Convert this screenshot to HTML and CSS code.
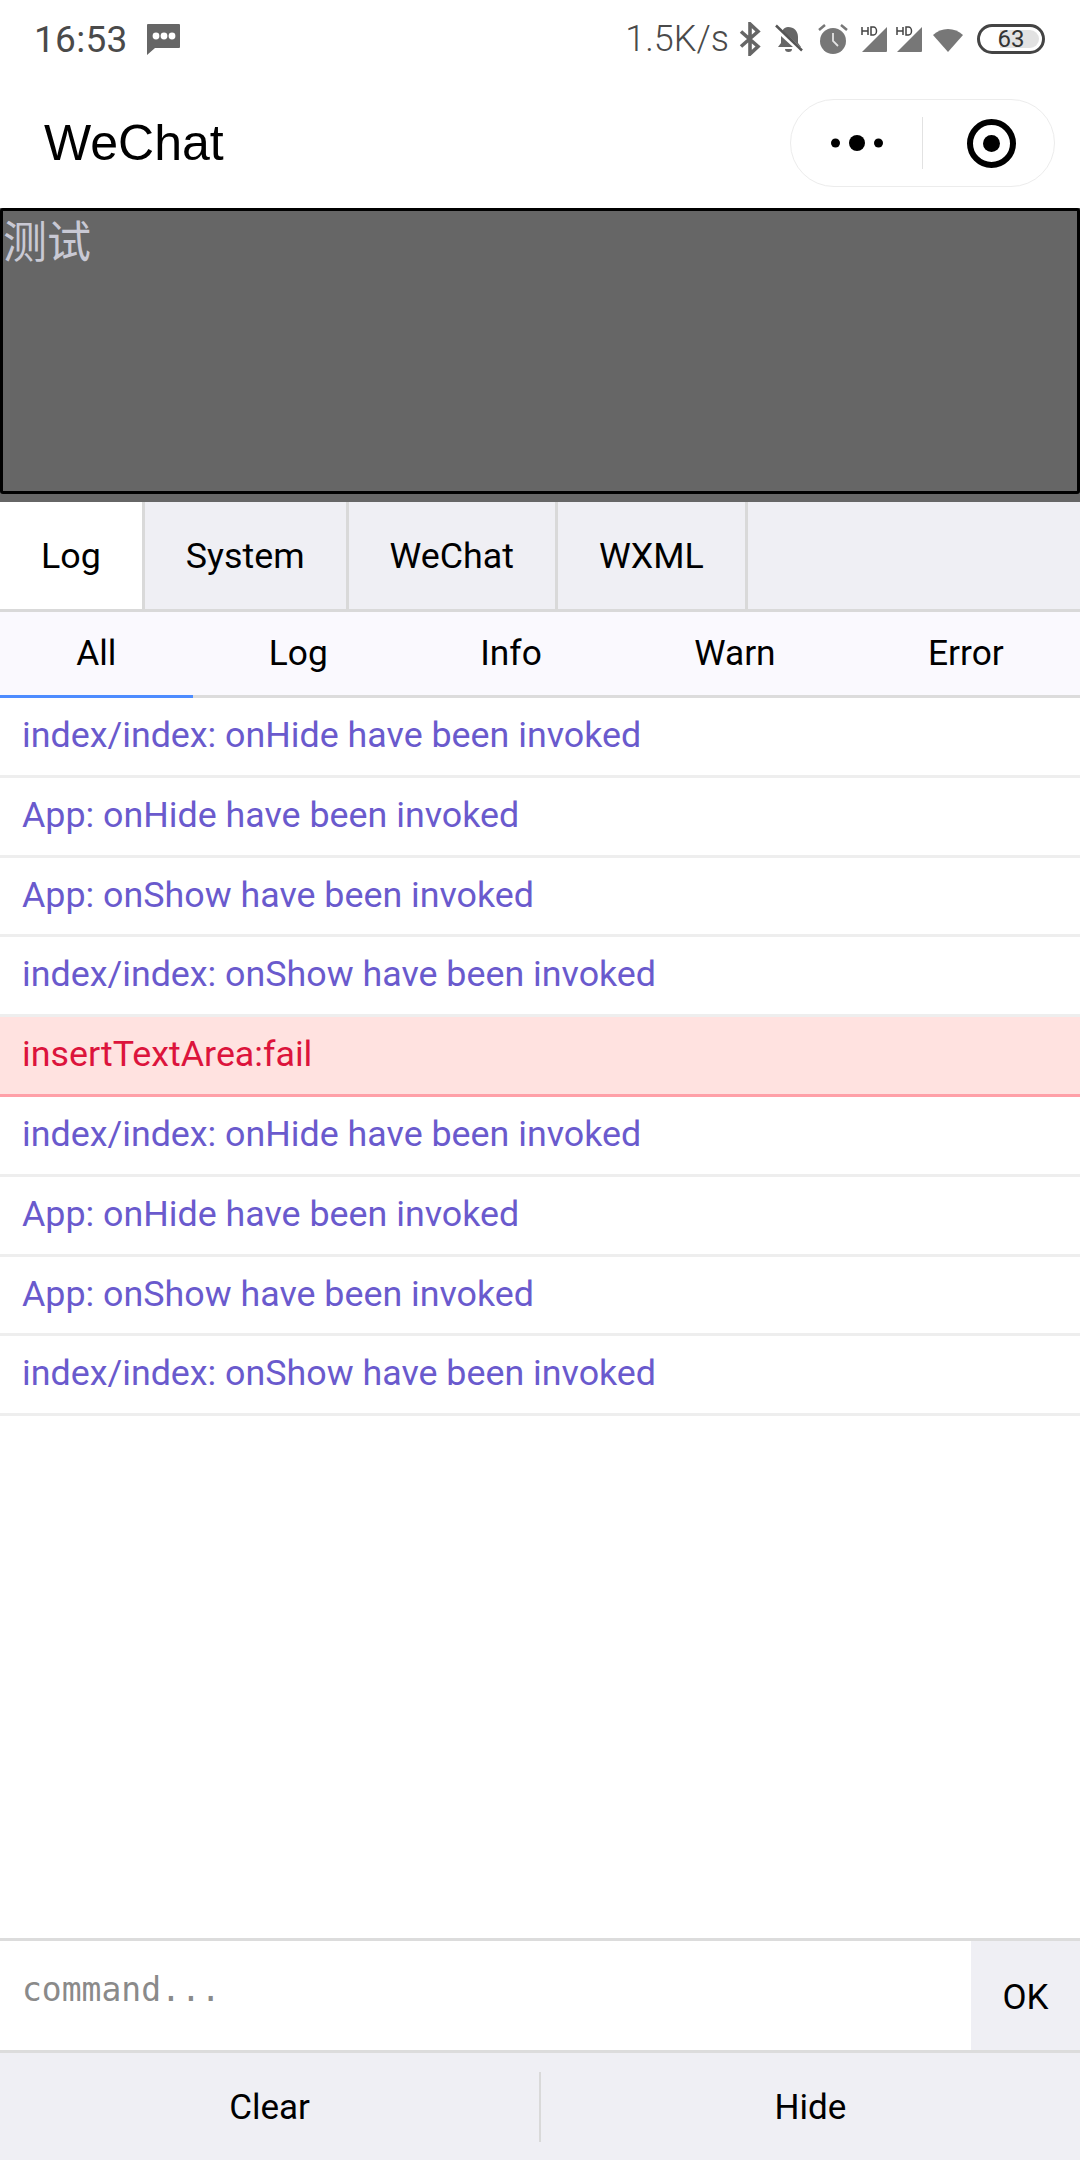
FILE: index.html
```html
<!DOCTYPE html>
<html lang="en">
<head>
<meta charset="utf-8">
<title>WeChat</title>
<link rel="stylesheet" href="styles.css">
</head>
<body>
<div class="app">
  <header class="status">
    <span class="time">16:53</span>
    <svg class="ic-msg" viewBox="0 0 33 31"><path d="M1 0h31a1 1 0 0 1 1 1v22a1 1 0 0 1-1 1H8l-8 7V1a1 1 0 0 1 1-1z" fill="#666"/><circle cx="9" cy="12" r="3.4" fill="#fff"/><circle cx="17" cy="12" r="3.4" fill="#fff"/><circle cx="25" cy="12" r="3.4" fill="#fff"/></svg>
    <span class="spacer"></span>
    <span class="speed">1.5K/s</span>
    <svg class="ic-bt" viewBox="0 0 22 34"><path d="M2 9.500l17 15-8 7.500V2l8 7.500L2 24.500" fill="none" stroke="#666" stroke-width="3.600"/></svg>
    <svg class="ic-bell" viewBox="0 0 28 30"><path d="M13 3c6 0 10 4 10 10v6l3 4H3l3-4v-7c0-5 3-9 7-9z" fill="#666"/><path d="M10 25h7a3.500 3 0 0 1-7 0z" fill="#666"/><path d="M1 4l26 24" stroke="#fff" stroke-width="5"/><path d="M1 1.500l26 25" stroke="#555" stroke-width="2.500"/></svg>
    <svg class="ic-alarm" viewBox="0 0 30 30"><circle cx="15" cy="17" r="13" fill="#777"/><path d="M15 9v8l5 5" fill="none" stroke="#fff" stroke-width="1.800" opacity=".8"/><path d="M1 6l6-5M29 6l-6-5" stroke="#777" stroke-width="2.500"/></svg>
    <svg class="ic-sig" viewBox="0 0 27 27"><path d="M26 1v24a1 1 0 0 1-1 1H1z" fill="#777"/><path d="M1 1v8M7 1v8M1 5h6M10 1v8h2.500a3 4 0 0 0 0-8z" fill="none" stroke="#444" stroke-width="1.500"/></svg>
    <svg class="ic-sig sig2" viewBox="0 0 27 27"><path d="M26 1v24a1 1 0 0 1-1 1H1z" fill="#777"/><path d="M1 1v8M7 1v8M1 5h6M10 1v8h2.500a3 4 0 0 0 0-8z" fill="none" stroke="#444" stroke-width="1.500"/></svg>
    <svg class="ic-wifi" viewBox="0 0 30 25"><path d="M0 8C8 0 22 0 30 8L15 25z" fill="#777"/></svg>
    <span class="battery"><span class="batt-fill"></span><span class="batt-num">63</span></span>
  </header>

  <nav class="navbar">
    <span class="title">WeChat</span>
    <div class="capsule">
      <div class="cap-side cap-left">
        <svg class="ic-dots" viewBox="0 0 52 16"><circle cx="4.500" cy="8" r="4.500"/><circle cx="26" cy="8" r="8"/><circle cx="47.500" cy="8" r="4.500"/></svg>
      </div>
      <span class="cap-line"></span>
      <div class="cap-side cap-right">
        <svg class="ic-target" viewBox="0 0 49 49"><circle cx="24.500" cy="24.500" r="21.500" fill="none" stroke="#000" stroke-width="6"/><circle cx="24.500" cy="24.500" r="8.500"/></svg>
      </div>
    </div>
  </nav>

  <div class="editor-wrap">
    <div class="editor">测试</div>
  </div>

  <div class="tabs">
    <span class="tab active">Log</span>
    <span class="tab">System</span>
    <span class="tab">WeChat</span>
    <span class="tab">WXML</span>
  </div>

  <div class="filters">
    <span class="filter current">All</span>
    <span class="filter">Log</span>
    <span class="filter">Info</span>
    <span class="filter">Warn</span>
    <span class="filter">Error</span>
  </div>

  <main class="logs">
    <div class="row">index/index: onHide have been invoked</div>
    <div class="row">App: onHide have been invoked</div>
    <div class="row">App: onShow have been invoked</div>
    <div class="row">index/index: onShow have been invoked</div>
    <div class="row error">insertTextArea:fail</div>
    <div class="row">index/index: onHide have been invoked</div>
    <div class="row">App: onHide have been invoked</div>
    <div class="row">App: onShow have been invoked</div>
    <div class="row">index/index: onShow have been invoked</div>
  </main>

  <div class="cmd">
    <span class="cmd-input">command...</span>
    <span class="cmd-ok">OK</span>
  </div>

  <footer class="actions">
    <span class="action">Clear</span>
    <span class="action">Hide</span>
  </footer>
</div>
</body>
</html>
```
FILE: styles.css
```css
* { box-sizing: border-box; }
html, body { margin: 0; padding: 0; background: #fff; }
.app {
  width: 1080px;
  height: 2160px;
  display: flex;
  flex-direction: column;
  font-family: Roboto, "Noto Sans CJK SC", sans-serif;
  color: #000;
  overflow: hidden;
}

/* status bar */
.status {
  height: 78px;
  flex: none;
  display: flex;
  align-items: center;
  padding: 0 35px 0 34px;
  color: #4a4a4a;
}
.time { font-size: 37px; line-height: 1; font-weight: 400; letter-spacing: .3px; }
.speed { font-size: 36px; line-height: 1; font-weight: 300; }
.spacer { flex: 1; }
.status svg { flex: none; display: block; }
.ic-msg { width: 33px; height: 31px; margin-left: 19px; }
.ic-bt { width: 22px; height: 34px; margin-left: 10px; }
.ic-bell { width: 28px; height: 30px; margin-left: 14px; }
.ic-alarm { width: 30px; height: 30px; margin-left: 15px; }
.ic-sig { width: 27px; height: 27px; margin-left: 13px; }
.sig2 { margin-left: 8px; }
.ic-wifi { width: 30px; height: 25px; margin-left: 10px; }
.battery {
  position: relative;
  width: 68px;
  height: 30px;
  margin-left: 14px;
  border: 3px solid #444;
  border-radius: 15px;
  display: flex;
  align-items: center;
  justify-content: center;
}
.batt-fill {
  position: absolute;
  left: 3px;
  top: 3px;
  bottom: 3px;
  width: 56px;
  background: linear-gradient(90deg, #fff 30%, #e2e2e2 30%);
  border-radius: 10px;
}
.batt-num { position: relative; font-size: 24px; line-height: 1; color: #333; }

/* nav */
.navbar {
  height: 130px;
  flex: none;
  display: flex;
  align-items: center;
  justify-content: space-between;
  padding: 0 25px 0 44px;
}
.title { font-family: "Liberation Sans", sans-serif; font-size: 50px; line-height: 52px; }
.capsule {
  width: 265px;
  height: 88px;
  display: flex;
  align-items: center;
  border: 1px solid #ececec;
  border-radius: 44px;
}
.cap-side { display: flex; align-items: center; justify-content: center; }
.cap-left { flex: none; width: 131px; }
.cap-right { flex: 1; padding-left: 5px; }
.cap-line { width: 1px; height: 52px; background: #e2e2e2; }
.ic-dots { width: 52px; height: 16px; display: block; }
.ic-target { width: 49px; height: 49px; display: block; }

/* editor */
.editor-wrap { height: 294px; flex: none; background: #666; padding-bottom: 8px; }
.editor {
  height: 286px;
  background: #666;
  border: 3px solid #000;
  border-radius: 3px;
  color: #c9c9d4;
  font-family: "Noto Sans CJK SC", sans-serif;
  font-size: 44px;
  font-weight: 400;
  line-height: 56px;
}

/* tabs */
.tabs {
  height: 110px;
  flex: none;
  display: flex;
  background: #efeff4;
  border-bottom: 3px solid #d9d9d9;
}
.tab {
  padding: 0 41px;
  font-size: 35.800px;
  line-height: 108px;
  border-right: 3px solid #d9d9d9;
}
.tab.active { background: #fff; }

.filters {
  height: 86px;
  flex: none;
  display: flex;
  background: #faf9fe;
  border-bottom: 3px solid #dcdcdc;
}
.filter {
  flex: 1 1 auto;
  text-align: center;
  font-size: 35.300px;
  line-height: 83px;
  height: 86px;
}
.filter.current { border-bottom: 3px solid #4d8cff; }

/* log rows */
.logs { flex: 1; background: #fff; }
.row {
  height: 79.800px;
  padding-left: 22px;
  font-size: 35.800px;
  line-height: 75px;
  color: #6a5acd;
  border-bottom: 3px solid #eee;
}
.row.error { color: #dc143c; background: #ffe2e0; border-bottom-color: #ffa0a8; }

/* command */
.cmd {
  height: 115px;
  flex: none;
  display: flex;
  border-top: 3px solid #dcdcdc;
  border-bottom: 3px solid #dcdcdc;
}
.cmd-input {
  flex: 1;
  padding-left: 22px;
  font-family: "DejaVu Sans Mono", monospace;
  font-size: 33px;
  line-height: 98px;
  color: #8a8a8a;
}
.cmd-ok {
  width: 109px;
  background: #efeff4;
  text-align: center;
  font-size: 35px;
  line-height: 114px;
}

/* actions */
.actions {
  height: 107px;
  flex: none;
  display: flex;
  align-items: center;
  background: #efeff4;
}
.action {
  flex: 1;
  height: 70px;
  text-align: center;
  font-size: 35px;
  line-height: 71px;
}
.action:first-child { border-right: 2px solid #d9d9d9; }
```
